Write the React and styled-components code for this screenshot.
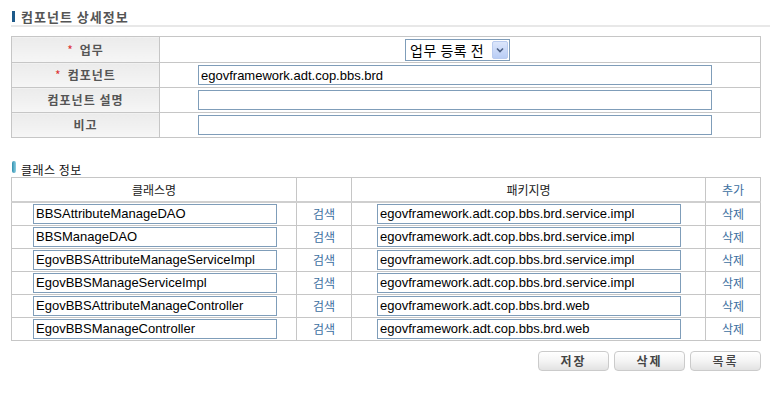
import React from 'react';
import styled, { createGlobalStyle } from 'styled-components';

const GlobalStyle = createGlobalStyle`
  body {
    margin: 0;
    background: #fff;
    font-family: "Liberation Sans", "Noto Sans CJK KR", sans-serif;
    font-size: 12px;
    color: #333;
  }
`;

const Page = styled.div`
  width: 750px;
  padding: 9px 0 0 11px;
`;

const TitleBar = styled.div`
  display: flex;
  align-items: center;
  gap: 6px;
  height: 15px;
  padding-left: 1px;
  border-bottom: 2px solid #e8e8e8;
  padding-bottom: 1px;
  width: 758px;
`;

const TitleMark = styled.span`
  width: 3px;
  height: 11px;
  background: #1d5a8a;
`;

const Title = styled.h2`
  margin: 0;
  font-family: "Noto Sans CJK KR", sans-serif;
  font-size: 13px;
  line-height: 15px;
  font-weight: 700;
  color: #555;
  letter-spacing: 1px;
`;

const Table = styled.table`
  width: 750px;
  border-collapse: collapse;
  table-layout: fixed;
  border: 1px solid #c6c6c6;
  margin-top: ${(p) => p.$top || 0}px;
`;

const Row = styled.tr`
  height: ${(p) => p.$h || 25}px;
`;

const Label = styled.th`
  padding: 0;
  border: 1px solid #c6c6c6;
  background: linear-gradient(#ebebeb, #f6f6f6);
  font-family: "Noto Sans CJK KR", sans-serif;
  font-size: 12px;
  font-weight: 700;
  color: #555;
  text-align: center;
  line-height: 14px;
  letter-spacing: 1px;
`;

const Star = styled.span`
  color: #d33;
  font-weight: 400;
  margin-right: 6px;
`;

const Value = styled.td`
  border: 1px solid #c6c6c6;
  padding: 0 0 0 ${(p) => (p.$center ? 0 : 38)}px;
  text-align: ${(p) => (p.$center ? 'center' : 'left')};
`;

const TextInput = styled.input`
  box-sizing: border-box;
  display: block;
  width: ${(p) => p.$w}px;
  height: 20px;
  margin: 0;
  padding: 0 2px;
  border: 1px solid #7f9db9;
  font-family: "Liberation Sans", sans-serif;
  font-size: 13px;
  color: #000;
  background: #fff;
  outline: none;
`;

const SelectBox = styled.div`
  display: inline-flex;
  align-items: center;
  justify-content: space-between;
  box-sizing: border-box;
  width: 105px;
  height: 22px;
  margin-left: -5px;
  padding: 0 1px 0 4px;
  border: 1px solid #7f9db9;
  background: #fff;
  vertical-align: middle;
`;

const SelectText = styled.span`
  font-family: "Noto Sans CJK KR", sans-serif;
  font-size: 14px;
  line-height: 18px;
  color: #000;
  letter-spacing: 0.5px;
`;

const ArrowBox = styled.span`
  display: flex;
  align-items: center;
  justify-content: center;
  width: 16px;
  height: 18px;
  box-sizing: border-box;
  border: 1px solid #b9cbef;
  border-radius: 2px;
  background: linear-gradient(#dce6fb, #b9cdf5);
`;

const SubHead = styled.div`
  display: flex;
  align-items: flex-end;
  gap: 5px;
  margin-top: 23px;
  padding-left: 1px;
  height: 16px;
`;

const Pill = styled.span`
  width: 4px;
  height: 12px;
  margin-bottom: 4px;
  border-radius: 2px;
  background: linear-gradient(90deg, #2f8fae, #8fd0e3);
`;

const SubTitle = styled.span`
  font-family: "Noto Sans CJK KR", sans-serif;
  font-size: 12px;
  line-height: 14px;
  color: #111;
  letter-spacing: 0.5px;
`;

const Head = styled.th`
  height: 23px;
  padding: 0;
  border: 1px solid #c6c6c6;
  border-bottom: 2px solid #cfcfcf;
  background: #fff;
  font-family: "Noto Sans CJK KR", sans-serif;
  font-size: 12px;
  font-weight: 400;
  color: #222;
  text-align: center;
`;

const Cell = styled.td`
  border: 1px solid #c6c6c6;
  padding: 0 0 0 ${(p) => p.$pad || 0}px;
  text-align: ${(p) => (p.$pad ? 'left' : 'center')};
`;

const Link = styled.a`
  font-family: "Noto Sans CJK KR", sans-serif;
  font-size: 12px;
  color: #3d6f9f;
  text-decoration: none;
  cursor: pointer;
`;

const ButtonBar = styled.div`
  display: flex;
  justify-content: flex-end;
  gap: 5px;
  margin-top: 10px;
  width: 750px;
`;

const Button = styled.button`
  width: 71px;
  height: 20px;
  padding: 0;
  border: 1px solid #cbcbcb;
  border-radius: 4px;
  background: linear-gradient(#ffffff, #f4f4f4 50%, #e2e2e2);
  font-family: "Noto Sans CJK KR", sans-serif;
  font-size: 12px;
  font-weight: ${(p) => (p.$plain ? 500 : 700)};
  color: #444;
  letter-spacing: 2px;
  cursor: pointer;
`;

const classes = [
  ['BBSAttributeManageDAO', 'egovframework.adt.cop.bbs.brd.service.impl'],
  ['BBSManageDAO', 'egovframework.adt.cop.bbs.brd.service.impl'],
  ['EgovBBSAttributeManageServiceImpl', 'egovframework.adt.cop.bbs.brd.service.impl'],
  ['EgovBBSManageServiceImpl', 'egovframework.adt.cop.bbs.brd.service.impl'],
  ['EgovBBSAttributeManageController', 'egovframework.adt.cop.bbs.brd.web'],
  ['EgovBBSManageController', 'egovframework.adt.cop.bbs.brd.web'],
];

const ComponentDetail = () => {
  return (
    <>
      <GlobalStyle />
      <Page>
        <TitleBar>
          <TitleMark />
          <Title>컴포넌트 상세정보</Title>
        </TitleBar>

        <Table $top={9}>
          <colgroup>
            <col style={{ width: 148 }} />
            <col />
          </colgroup>
          <tbody>
            <Row $h={26}>
              <Label><Star>*</Star>업무</Label>
              <Value $center>
                <SelectBox>
                  <SelectText>업무 등록 전</SelectText>
                  <ArrowBox>
                    <svg width="8" height="6" viewBox="0 0 8 6">
                      <path d="M1 1.5 L4 4.5 L7 1.5" fill="none" stroke="#4d6185" strokeWidth="1.6" />
                    </svg>
                  </ArrowBox>
                </SelectBox>
              </Value>
            </Row>
            <Row>
              <Label><Star>*</Star>컴포넌트</Label>
              <Value>
                <TextInput $w={514} defaultValue="egovframework.adt.cop.bbs.brd" />
              </Value>
            </Row>
            <Row>
              <Label>컴포넌트 설명</Label>
              <Value>
                <TextInput $w={514} />
              </Value>
            </Row>
            <Row>
              <Label>비고</Label>
              <Value>
                <TextInput $w={514} />
              </Value>
            </Row>
          </tbody>
        </Table>

        <SubHead>
          <Pill />
          <SubTitle>클래스 정보</SubTitle>
        </SubHead>

        <Table>
          <colgroup>
            <col style={{ width: 285 }} />
            <col style={{ width: 55 }} />
            <col style={{ width: 354 }} />
            <col />
          </colgroup>
          <thead>
            <tr>
              <Head>클래스명</Head>
              <Head></Head>
              <Head>패키지명</Head>
              <Head><Link>추가</Link></Head>
            </tr>
          </thead>
          <tbody>
            {classes.map(([name, pkg]) => (
              <Row key={name} $h={23}>
                <Cell $pad={21}>
                  <TextInput $w={244} defaultValue={name} />
                </Cell>
                <Cell><Link>검색</Link></Cell>
                <Cell $pad={25}>
                  <TextInput $w={304} defaultValue={pkg} />
                </Cell>
                <Cell><Link>삭제</Link></Cell>
              </Row>
            ))}
          </tbody>
        </Table>

        <ButtonBar>
          <Button>저장</Button>
          <Button>삭제</Button>
          <Button $plain>목록</Button>
        </ButtonBar>
      </Page>
    </>
  );
};

export default ComponentDetail;
